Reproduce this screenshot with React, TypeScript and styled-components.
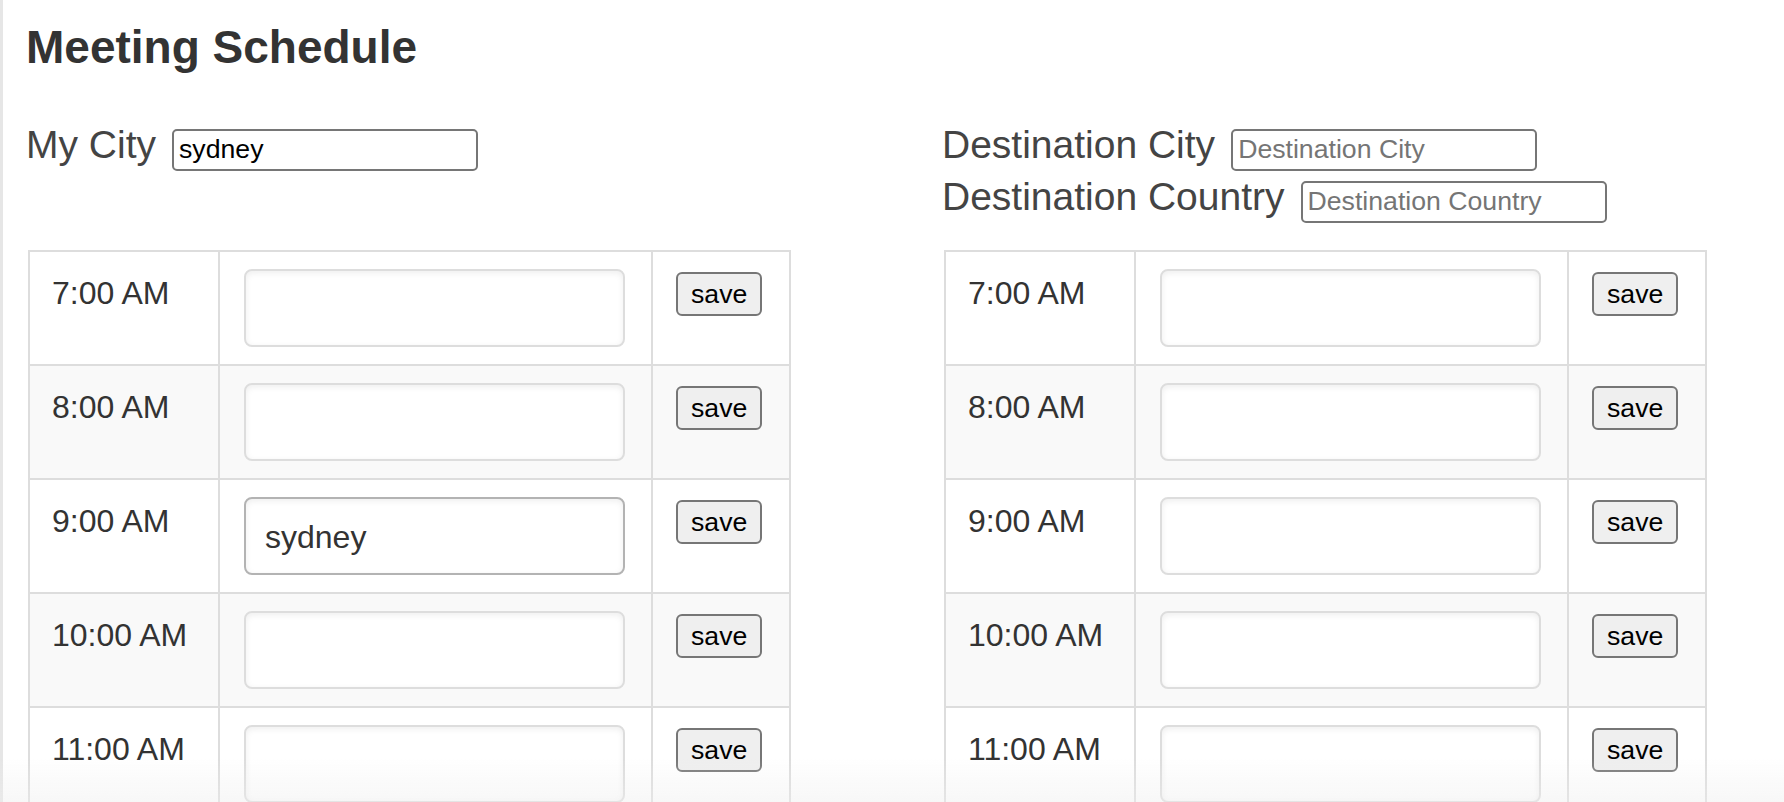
import React, { useState } from "react";
import styled, { createGlobalStyle } from "styled-components";

const GlobalStyle = createGlobalStyle`
  html, body {
    margin: 0;
    padding: 0;
    background: #ffffff;
  }
  body {
    font-family: "Liberation Sans", Arial, Helvetica, sans-serif;
    color: #333333;
  }
`;

const Page = styled.div`
  min-height: 100vh;
  box-sizing: border-box;
  border-left: 3px solid #e6e6e6;
  padding: 21px 0 0 23px;
`;

const Title = styled.h1`
  margin: 0 0 46px;
  font-size: 46px;
  line-height: 52px;
  font-weight: 700;
  color: #333333;
`;

const Columns = styled.div`
  display: grid;
  grid-template-columns: 916px auto;
  grid-template-rows: auto auto;
  row-gap: 27px;
  justify-content: start;
  justify-items: start;
`;

const FieldGroup = styled.div`
  display: flex;
  flex-direction: column;
`;

const FieldRow = styled.div`
  display: flex;
  align-items: baseline;
  gap: 16px;
  height: 52px;
`;

const FieldLabel = styled.label`
  font-size: 39px;
  line-height: 52px;
  color: #444444;
  white-space: nowrap;
`;

const TextInput = styled.input`
  width: 306px;
  height: 42px;
  box-sizing: border-box;
  margin: 0;
  padding: 2px 5px;
  border: 2px solid #767676;
  border-radius: 5px;
  background: #ffffff;
  font-family: "Liberation Sans", Arial, sans-serif;
  font-size: 26.67px;
  color: #000000;
  outline: none;
  &::placeholder {
    color: #757575;
  }
`;

const Table = styled.table`
  margin-left: 2px;
  border-spacing: 0;
  border-top: 2px solid #dddddd;
  border-left: 2px solid #dddddd;
  font-size: 32px;
  line-height: 48px;
  color: #333333;
  align-self: start;
  justify-self: start;
`;

const Row = styled.tr<{ $striped: boolean }>`
  background: ${(p) => (p.$striped ? "#f9f9f9" : "#ffffff")};
`;

const Cell = styled.td`
  vertical-align: top;
  border-right: 2px solid #dddddd;
  border-bottom: 2px solid #dddddd;
`;

const TimeCell = styled(Cell)`
  width: 144px;
  padding: 17px 22px;
  white-space: nowrap;
`;

const EntryCell = styled(Cell)`
  padding: 17px 26px 17px 24px;
`;

const ActionCell = styled(Cell)`
  padding: 17px 27px 17px 23px;
`;

const Entry = styled.textarea<{ $filled: boolean }>`
  display: block;
  width: 381px;
  height: 78px;
  box-sizing: border-box;
  margin: 0;
  padding: 14px 19px;
  border: 2px solid ${(p) => (p.$filled ? "#b3b3b3" : "#dddddd")};
  border-radius: 8px;
  box-shadow: inset 0 2px 6px #eeeeee;
  background: #ffffff;
  font-family: "Liberation Sans", Arial, sans-serif;
  font-size: 32px;
  line-height: 48px;
  color: #333333;
  resize: none;
  overflow: hidden;
  outline: none;
`;

const SaveButton = styled.button`
  display: block;
  margin: 3px 0 0;
  height: 44px;
  padding: 0 13px;
  border: 2px solid #767676;
  border-radius: 6px;
  background: #efefef;
  font-family: "Liberation Sans", Arial, sans-serif;
  font-size: 26.67px;
  color: #000000;
  cursor: pointer;
`;

const BottomFade = styled.div`
  position: fixed;
  left: 0;
  right: 0;
  bottom: 0;
  height: 44px;
  pointer-events: none;
  background: linear-gradient(
    to bottom,
    rgba(238, 238, 238, 0),
    rgba(238, 238, 238, 0.45)
  );
`;

const TIMES = ["7:00 AM", "8:00 AM", "9:00 AM", "10:00 AM", "11:00 AM"];

type ScheduleProps = {
  initial: Record<string, string>;
};

function Schedule({ initial }: ScheduleProps) {
  const [notes, setNotes] = useState<Record<string, string>>(initial);
  return (
    <Table>
      <tbody>
        {TIMES.map((t, i) => (
          <Row key={t} $striped={i % 2 === 1}>
            <TimeCell>{t}</TimeCell>
            <EntryCell>
              <Entry
                $filled={!!notes[t]}
                value={notes[t] ?? ""}
                onChange={(e) => setNotes({ ...notes, [t]: e.target.value })}
              />
            </EntryCell>
            <ActionCell>
              <SaveButton type="button">save</SaveButton>
            </ActionCell>
          </Row>
        ))}
      </tbody>
    </Table>
  );
}

export default function App() {
  const [myCity, setMyCity] = useState("sydney");
  const [destCity, setDestCity] = useState("");
  const [destCountry, setDestCountry] = useState("");

  return (
    <>
      <GlobalStyle />
      <Page>
        <Title>Meeting Schedule</Title>
        <Columns>
          <FieldGroup>
            <FieldRow>
              <FieldLabel htmlFor="my-city">My City</FieldLabel>
              <TextInput
                id="my-city"
                value={myCity}
                onChange={(e) => setMyCity(e.target.value)}
              />
            </FieldRow>
          </FieldGroup>
          <FieldGroup>
            <FieldRow>
              <FieldLabel htmlFor="dest-city">Destination City</FieldLabel>
              <TextInput
                id="dest-city"
                placeholder="Destination City"
                value={destCity}
                onChange={(e) => setDestCity(e.target.value)}
              />
            </FieldRow>
            <FieldRow>
              <FieldLabel htmlFor="dest-country">Destination Country</FieldLabel>
              <TextInput
                id="dest-country"
                placeholder="Destination Country"
                value={destCountry}
                onChange={(e) => setDestCountry(e.target.value)}
              />
            </FieldRow>
          </FieldGroup>
          <Schedule initial={{ "9:00 AM": "sydney" }} />
          <Schedule initial={{}} />
        </Columns>
      </Page>
      <BottomFade />
    </>
  );
}
